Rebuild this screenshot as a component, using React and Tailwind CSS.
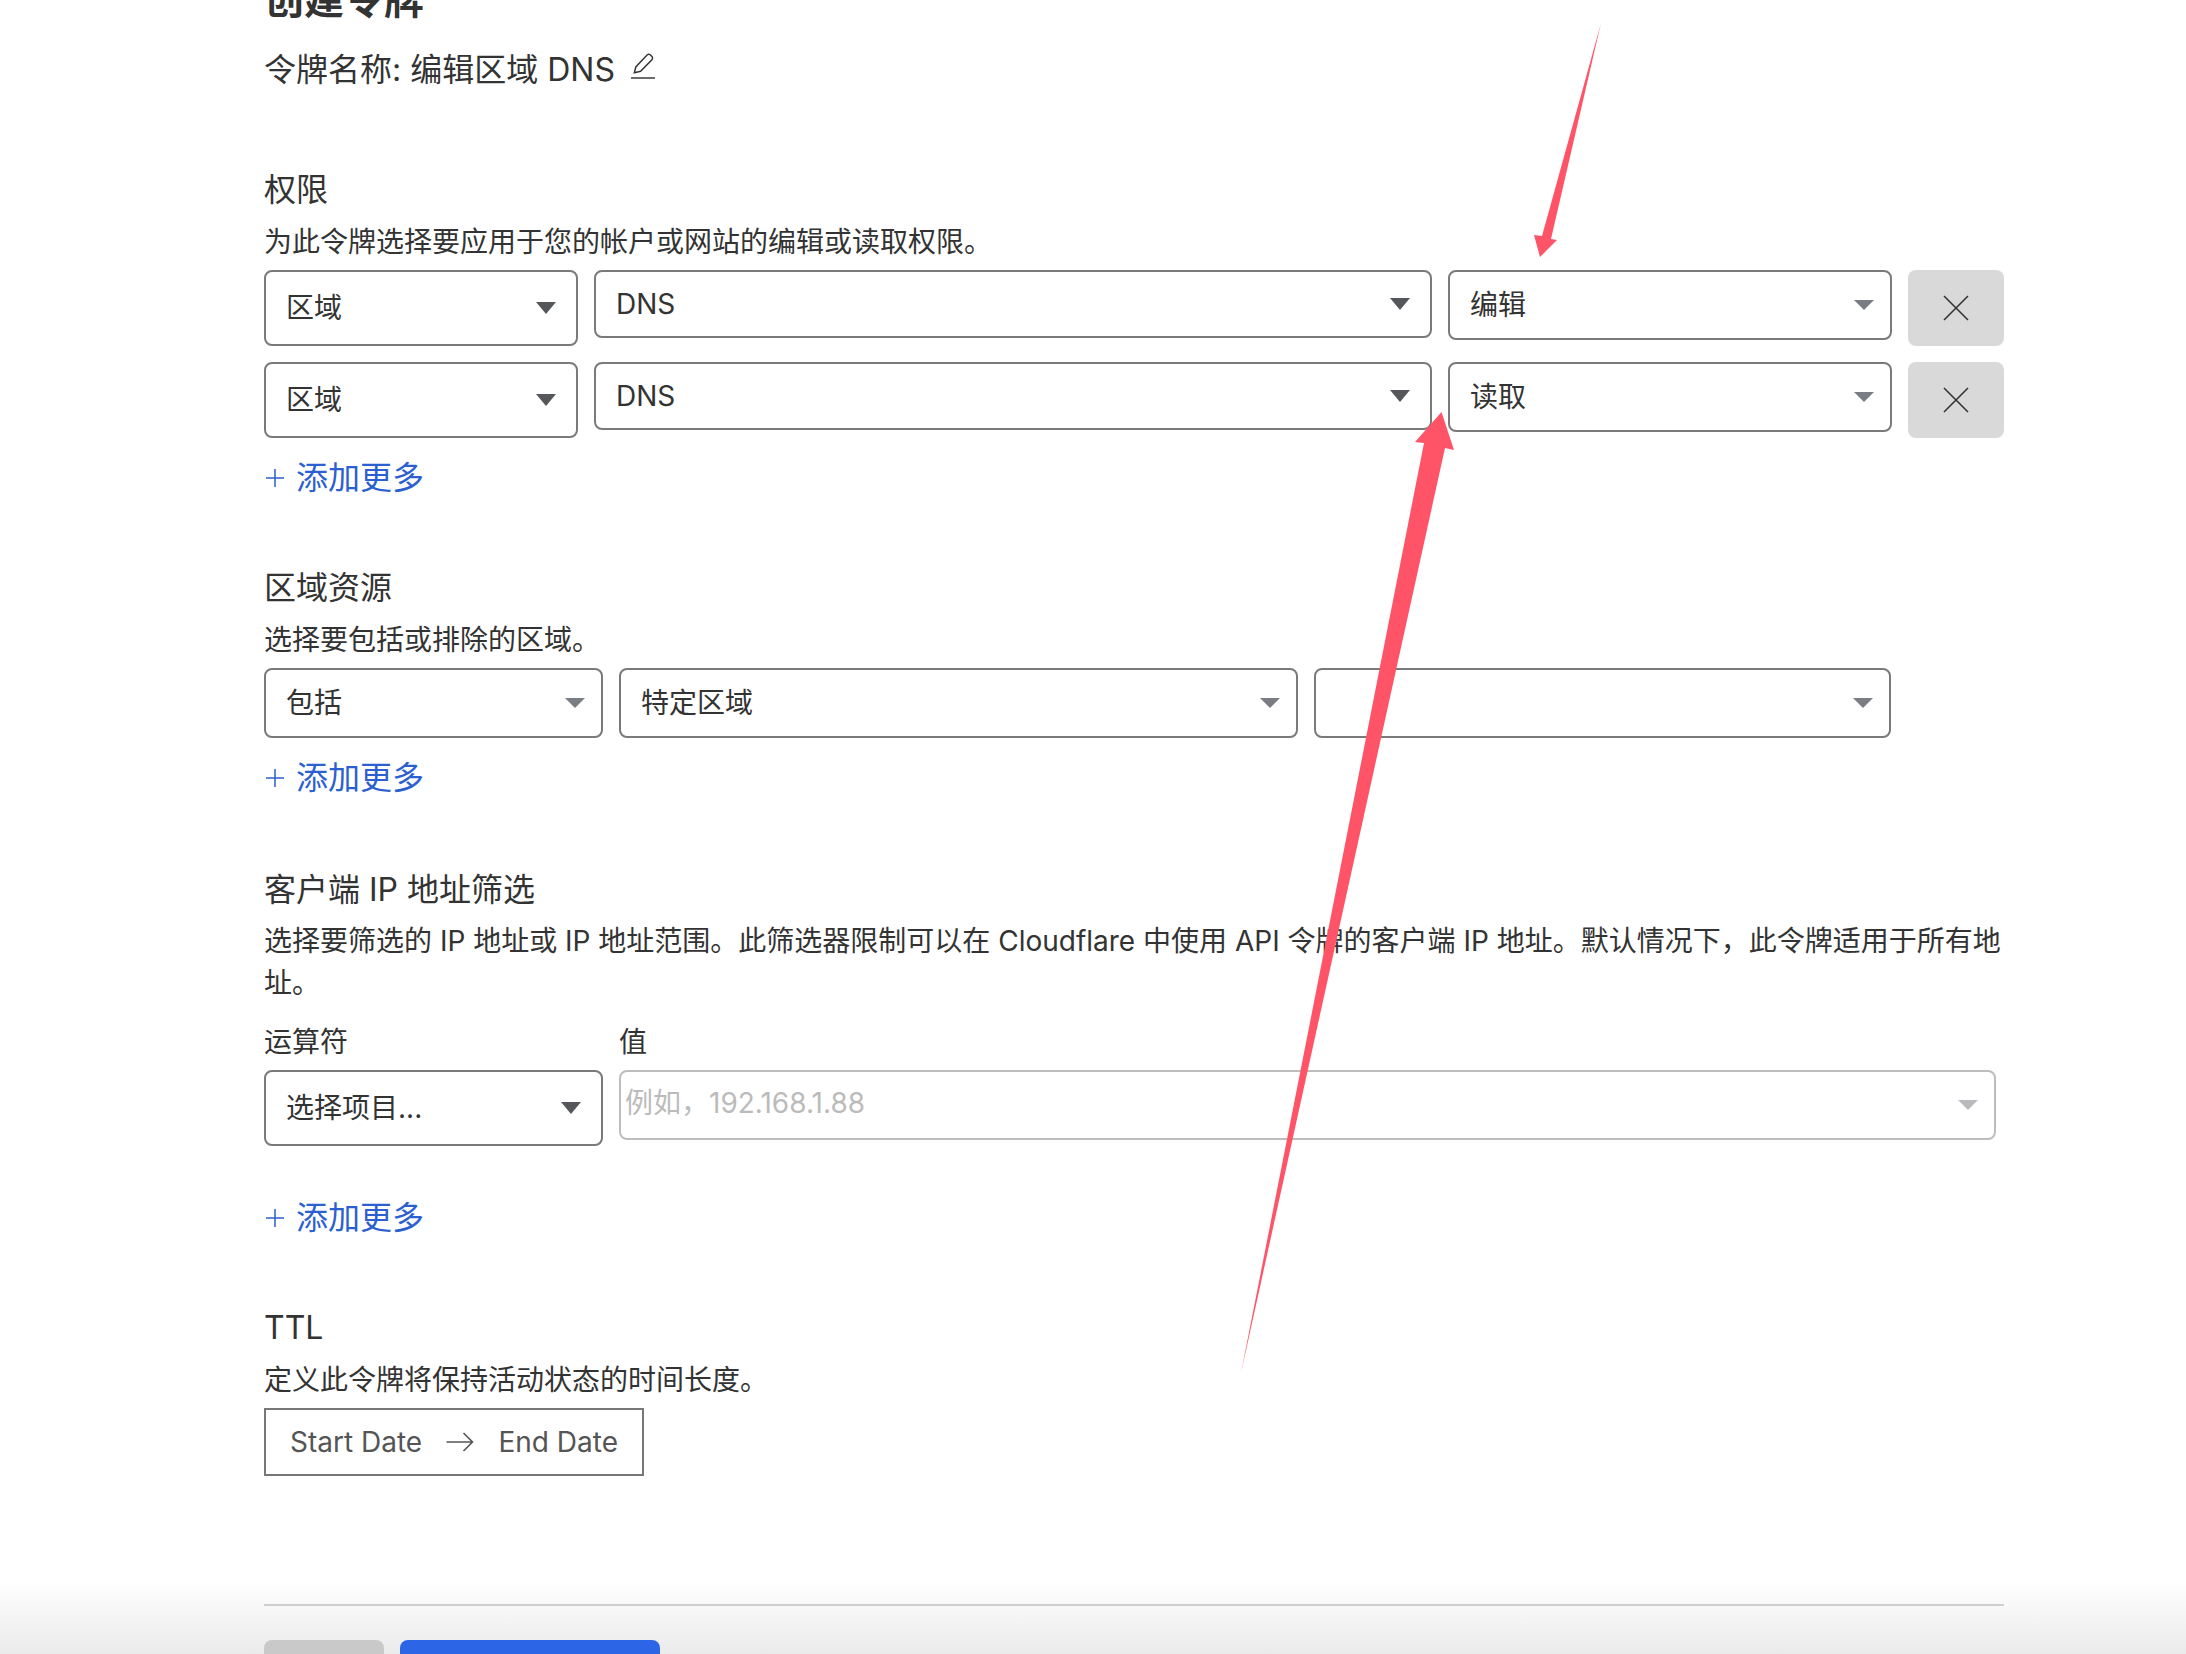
import React from "react";

const Caret = ({ color = "#55575a", tall }) => (
  <svg viewBox="0 0 20 12" className={tall ? "w-5 h-3 shrink-0" : "w-5 h-2.5 shrink-0"} preserveAspectRatio="none">
    <path d="M0 0H20L10 12Z" fill={color} />
  </svg>
);

const Select = ({ className, children, color, tall, pr = "pr-5" }) => (
  <div className={`flex items-center justify-between rounded-lg border-2 border-[#7a7a7a] pl-5 ${pr} ${className}`}>
    <span className="truncate">{children}</span>
    <Caret color={color} tall={tall} />
  </div>
);

const CloseButton = () => (
  <div className="flex w-24 h-19 items-center justify-center rounded-lg bg-[#d9d9d9]">
    <svg viewBox="0 0 26 26" className="size-6.5" fill="none" stroke="#333" strokeWidth="1.6">
      <path d="M1 1L25 25M25 1L1 25" />
    </svg>
  </div>
);

const AddMore = ({ className }) => (
  <div className={`flex h-10 items-center gap-3 pl-0.5 text-[32px] text-[#2c5fd0] ${className}`}>
    <svg viewBox="0 0 18 18" className="size-4.5" fill="none" stroke="#2c5fd0" strokeWidth="1.5">
      <path d="M9 0V18M0 9H18" />
    </svg>
    <span>添加更多</span>
  </div>
);

const Heading = ({ className, children }) => <h3 className={`h-10 leading-10 text-[32px] ${className}`}>{children}</h3>;

const Desc = ({ children }) => <p className="mt-4 leading-8">{children}</p>;

const PermissionRow = ({ level }) => (
  <div className="flex items-start gap-4">
    <Select className="w-[314px] h-19" tall>区域</Select>
    <Select className="flex-1 h-17" tall>DNS</Select>
    <Select className="w-[444px] h-17.5" color="#7a7d83" pr="pr-4">{level}</Select>
    <CloseButton />
  </div>
);

export default function App() {
  return (
    <div
      className="relative h-screen overflow-hidden bg-white text-[28px] text-[#333]"
      style={{ fontFamily: 'Inter, "Noto Sans CJK SC", sans-serif' }}
    >
      <div className="ml-66 w-[1740px]">
        <h1 className="-mt-5 h-10 text-[40px] leading-10 font-bold">创建令牌</h1>
        <div className="mt-7.5 flex h-10 items-center gap-4 text-[32px]">
          <span>令牌名称: 编辑区域 DNS</span>
          <svg viewBox="0 0 25 27" className="mb-2 h-7 w-6" fill="none" stroke="#333" strokeWidth="1.5">
            <path d="M3.5 20.5L5 14.5L17 1.8Q18.5 0.6 20 1.8L22 3.8Q23 5.3 22 6.8L10 19Z" />
            <path d="M0 26H25" />
          </svg>
        </div>

        <Heading className="mt-20">权限</Heading>
        <Desc>为此令牌选择要应用于您的帐户或网站的编辑或读取权限。</Desc>
        <div className="mt-3 flex flex-col gap-4">
          <PermissionRow level="编辑" />
          <PermissionRow level="读取" />
        </div>
        <AddMore className="mt-5" />

        <Heading className="mt-17.5">区域资源</Heading>
        <Desc>选择要包括或排除的区域。</Desc>
        <div className="mt-3 flex gap-4 w-[1627px]">
          <Select className="w-[339px] h-17.5" color="#7a7d83" pr="pr-4">包括</Select>
          <Select className="w-[679px] h-17.5" color="#7a7d83" pr="pr-4">特定区域</Select>
          <Select className="flex-1 h-17.5" color="#7a7d83" pr="pr-4" />
        </div>
        <AddMore className="mt-5" />

        <Heading className="mt-18">客户端 IP 地址筛选</Heading>
        <p className="mt-2.5 leading-10.5">
          选择要筛选的 IP 地址或 IP 地址范围。此筛选器限制可以在 Cloudflare 中使用 API 令牌的客户端 IP 地址。默认情况下，此令牌适用于所有地址。
        </p>
        <div className="mt-5.5 flex items-start gap-4">
          <div className="w-[339px]">
            <div className="h-8 leading-8">运算符</div>
            <Select className="mt-3 h-19" tall>选择项目...</Select>
          </div>
          <div className="flex-1 pr-2">
            <div className="h-8 leading-8">值</div>
            <div className="mt-3 flex h-17.5 items-center justify-between rounded-lg border-2 border-[#bdbdbd] pr-4 pl-1 text-[#bbb]">
              <span className="pb-1">例如，192.168.1.88</span>
              <Caret color="#b9babd" />
            </div>
          </div>
        </div>
        <AddMore className="mt-13" />

        <Heading className="mt-17.5">TTL</Heading>
        <Desc>定义此令牌将保持活动状态的时间长度。</Desc>
        <div className="mt-3 flex h-17 w-95 items-center justify-between border-2 border-[#777] px-6 text-[#555]">
          <span>Start Date</span>
          <svg viewBox="0 0 27 20" className="h-5 w-7" fill="none" stroke="#555" strokeWidth="1.6">
            <path d="M0 10H26M17 1L26 10L17 19" />
          </svg>
          <span>End Date</span>
        </div>
      </div>

      {/* footer bar, cut off by the bottom of the window */}
      <div className="mt-26 h-19 bg-linear-to-b from-white to-[#eaeaea] pt-6">
        <div className="ml-66 w-[1740px] border-t-2 border-[#cfcfcf] pt-8.5">
          <div className="flex gap-4">
            <div className="h-12 w-30 rounded-lg bg-[#c9c9c9]" />
            <div className="h-12 w-65 rounded-lg bg-[#2c65e5]" />
          </div>
        </div>
      </div>

      {/* red annotation arrows drawn over the page */}
      <svg className="pointer-events-none absolute inset-0 h-full w-full" viewBox="0 0 2186 1654" fill="#ff5468">
        <path d="M1601 23L1551 239L1557 240L1540 257L1534 235L1542 236Z" />
        <path d="M1241 1373L1424 443L1415 442L1441.5 412L1454 450L1445 448Z" />
      </svg>
    </div>
  );
}
